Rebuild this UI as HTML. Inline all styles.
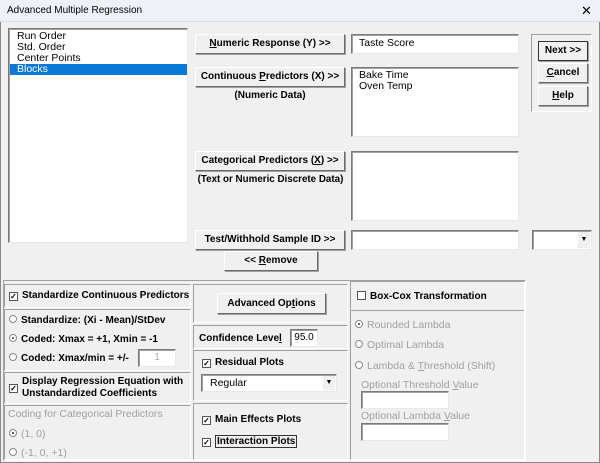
<!DOCTYPE html>
<html><head><style>
*{box-sizing:border-box}
body{margin:0;width:600px;height:463px;background:#f0f0f0;font-family:"Liberation Sans",sans-serif;font-size:10.5px;color:#000;position:relative;overflow:hidden}
.a{position:absolute;white-space:nowrap}
.title{left:0;top:0;width:600px;height:22px;background:#eef2f8;border-bottom:1px solid #d8dde4}
.win{left:0;top:0;width:600px;height:463px;border:1px solid #8a8a8a}
.sunk{background:#fff;border:1px solid;border-color:#7a7a7a #e8e8e8 #e8e8e8 #7a7a7a;box-shadow:inset 1px 1px 0 #a0a0a0}
.btn{background:#f0f0f0;border:1px solid;border-color:#fff #6a6a6a #6a6a6a #fff;box-shadow:1px 1px 0 #a0a0a0;font-weight:bold;text-align:center;font-size:10px}
.fr{border:1px solid;border-color:#a0a0a0 #fff #fff #a0a0a0}
.b{font-weight:bold;font-size:10px}
.g{color:#a0a0a0}
.cb{display:inline-block;width:9px;height:9px;border:1px solid #555;background:#fff;vertical-align:-1px;margin-right:4px;font-size:8px;line-height:7px;text-align:center}
.rd{display:inline-block;width:8px;height:8px;border-radius:50%;border:1px solid #888;background:#fff;vertical-align:0;margin-right:4px;position:relative}
.rd.on:after{content:"";position:absolute;left:2px;top:2px;width:2px;height:2px;background:#333;border-radius:50%}
u{text-decoration:underline}
</style></head><body>
<div class="a win"></div>
<div class="a title"><span class="a" style="left:7px;top:5px;font-size:10px">Advanced Multiple Regression</span><span class="a" style="left:581px;top:3px;font-size:13px">✕</span></div>

<div class="a sunk" style="left:8px;top:28px;width:180px;height:215px">
<div class="a" style="left:8px;top:2px;line-height:11px">Run Order<br>Std. Order<br>Center Points</div>
<div class="a" style="left:1px;top:35px;width:177px;height:11px;background:#0a78d7;color:#fff;padding-left:7px;line-height:11px">Blocks</div>
</div>

<div class="a btn" style="left:195px;top:34px;width:150px;height:20px;line-height:18px"><u>N</u>umeric Response (Y) &gt;&gt;</div>
<div class="a btn" style="left:195px;top:67px;width:150px;height:20px;line-height:18px">Continuous <u>P</u>redictors (X) &gt;&gt;</div>
<div class="a b" style="left:195px;top:90px;width:150px;text-align:center">(Numeric Data)</div>
<div class="a btn" style="left:195px;top:151px;width:150px;height:20px;line-height:18px">Categorical Predictors (<u>X</u>) &gt;&gt;</div>
<div class="a b" style="left:193px;top:174px;width:155px;text-align:center;font-size:9.8px">(Text or Numeric Discrete Data)</div>
<div class="a btn" style="left:195px;top:230px;width:150px;height:20px;line-height:18px">Test/Withhold Sample ID &gt;&gt;</div>
<div class="a btn" style="left:224px;top:251px;width:94px;height:20px;line-height:18px">&lt;&lt; <u>R</u>emove</div>

<div class="a sunk" style="left:351px;top:34px;width:168px;height:20px;padding:2px 7px">Taste Score</div>
<div class="a sunk" style="left:351px;top:67px;width:168px;height:70px;padding:2px 7px;line-height:11px">Bake Time<br>Oven Temp</div>
<div class="a sunk" style="left:351px;top:151px;width:168px;height:70px"></div>
<div class="a sunk" style="left:351px;top:230px;width:168px;height:20px"></div>
<div class="a sunk" style="left:532px;top:230px;width:60px;height:20px"><span class="a" style="right:1px;top:1px;width:12px;height:16px;background:#f0f0f0;font-size:7px;text-align:center;line-height:16px">▼</span></div>

<div class="a fr" style="left:531px;top:34px;width:61px;height:78px"></div>
<div class="a btn" style="left:538px;top:41px;width:50px;height:20px;line-height:18px;border-color:#333">Next &gt;&gt;</div>
<div class="a btn" style="left:538px;top:63px;width:50px;height:20px;line-height:18px"><u>C</u>ancel</div>
<div class="a btn" style="left:538px;top:86px;width:50px;height:20px;line-height:18px"><u>H</u>elp</div>

<div class="a fr" style="left:3px;top:280px;width:523px;height:181px"></div>
<div class="a fr" style="left:4px;top:284px;width:187px;height:24px"></div>
<div class="a b" style="left:9px;top:290px"><span class="cb">✓</span>Standardize Continuous Predictors</div>
<div class="a fr" style="left:4px;top:309px;width:187px;height:62px"></div>
<div class="a b" style="left:9px;top:315px"><span class="rd"></span>Standardize: (Xi - Mean)/StDev</div>
<div class="a b" style="left:9px;top:334px"><span class="rd on"></span>Coded: Xmax = +1, Xmin = -1</div>
<div class="a b" style="left:9px;top:353px"><span class="rd"></span>Coded: Xmax/min = +/-</div>
<div class="a sunk" style="left:138px;top:349px;width:38px;height:18px;color:#aaa;text-align:center;line-height:16px;font-size:10px">1</div>
<div class="a fr" style="left:4px;top:372px;width:187px;height:32px"></div>
<div class="a b" style="left:9px;top:376px;line-height:12px"><span class="cb" style="position:absolute;left:0;top:8px">✓</span><div style="padding-left:13px">Display Regression Equation with<br>Unstandardized Coefficients</div></div>
<div class="a fr" style="left:4px;top:405px;width:187px;height:55px"></div>
<div class="a g" style="left:8px;top:408px">Coding for Categorical Predictors</div>
<div class="a g" style="left:9px;top:428px"><span class="rd on"></span>(1, 0)</div>
<div class="a g" style="left:9px;top:447px"><span class="rd"></span>(-1, 0, +1)</div>

<div class="a fr" style="left:193px;top:284px;width:155px;height:39px"></div>
<div class="a btn" style="left:217px;top:293px;width:109px;height:21px;line-height:19px">Advanced Op<u>t</u>ions</div>
<div class="a fr" style="left:193px;top:325px;width:155px;height:24px"></div>
<div class="a b" style="left:199px;top:333px">Confidence Leve<u>l</u></div>
<div class="a sunk" style="left:290px;top:329px;width:28px;height:18px;font-size:10px;text-align:center;line-height:16px">95.0</div>
<div class="a fr" style="left:193px;top:350px;width:155px;height:51px"></div>
<div class="a b" style="left:202px;top:357px"><span class="cb">✓</span>Residual Plots</div>
<div class="a sunk" style="left:201px;top:374px;width:136px;height:18px;padding:2px 8px">Regular<span class="a" style="right:1px;top:1px;width:12px;height:14px;background:#f0f0f0;font-size:7px;text-align:center;line-height:14px">▼</span></div>
<div class="a fr" style="left:193px;top:403px;width:155px;height:57px"></div>
<div class="a b" style="left:202px;top:414px"><span class="cb">✓</span>Main Effects Plots</div>
<div class="a b" style="left:202px;top:436px"><span class="cb">✓</span><span style="border:1px solid #333;padding:0 1px">Interaction Plots</span></div>

<div class="a fr" style="left:350px;top:281px;width:175px;height:179px"></div>
<div class="a" style="left:351px;top:310px;width:173px;height:1px;background:#a0a0a0"></div>
<div class="a b" style="left:357px;top:291px"><span class="cb"></span>Box-Cox Transformation</div>
<div class="a g" style="left:355px;top:319px"><span class="rd on"></span>Rounded Lambda</div>
<div class="a g" style="left:355px;top:339px"><span class="rd"></span>Optimal Lambda</div>
<div class="a g" style="left:355px;top:360px"><span class="rd"></span>Lambda &amp; <u>T</u>hreshold (Shift)</div>
<div class="a g" style="left:361px;top:379px">Optional Threshold <u>V</u>alue</div>
<div class="a sunk" style="left:361px;top:391px;width:88px;height:18px"></div>
<div class="a g" style="left:361px;top:410px">Optional Lambda <u>V</u>alue</div>
<div class="a sunk" style="left:361px;top:423px;width:88px;height:18px"></div>
</body></html>
